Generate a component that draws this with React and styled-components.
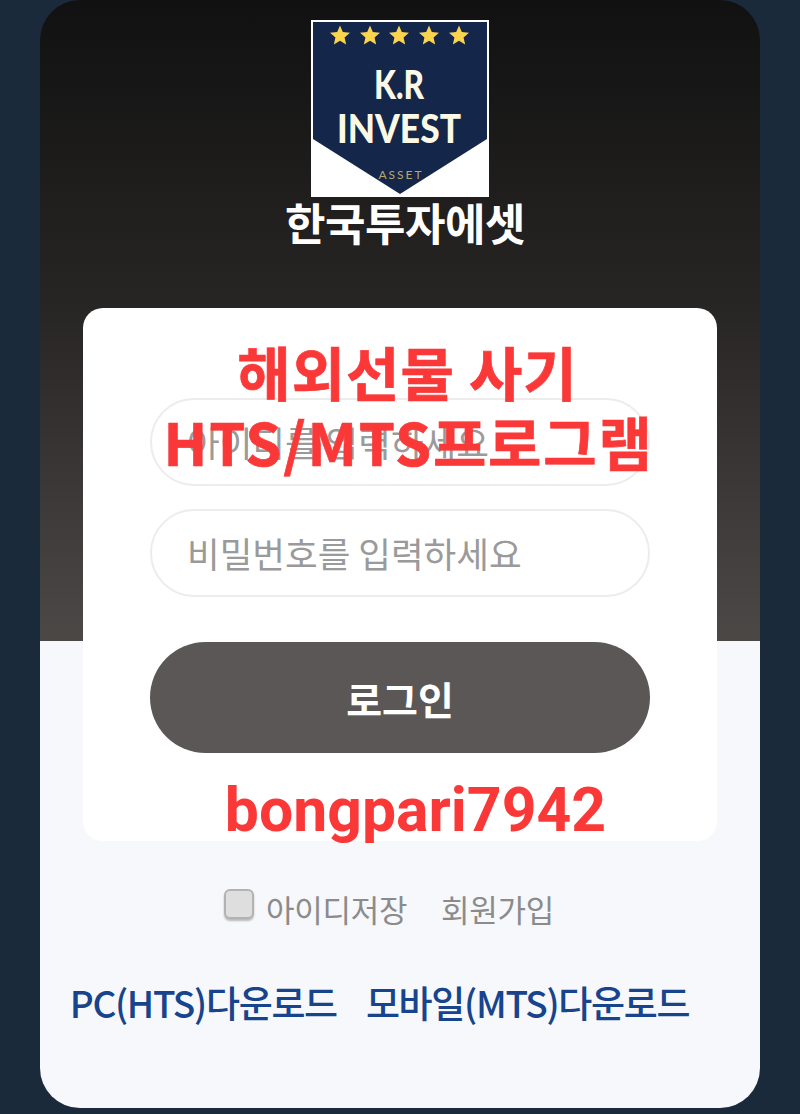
import styled, { createGlobalStyle } from "styled-components";

const KO = `"Noto Sans CJK KR", "Noto Sans", Roboto, sans-serif`;

const Global = createGlobalStyle`
  html, body { margin: 0; padding: 0; background: #1a2a3b; }
`;

const Page = styled.div`
  width: 800px;
  height: 1114px;
  padding: 0 40px;
  box-sizing: border-box;
  overflow: hidden;
  background: #1a2a3b;
  font-family: ${KO};
`;

const Frame = styled.div`
  height: 1108px;
  border-radius: 40px;
  overflow: hidden;
  display: flex;
  flex-direction: column;
  align-items: center;
  background: linear-gradient(#111 0, #272524 300px, #4b4846 641px, #f6f8fb 641px);
`;

const Logo = styled.svg`
  display: block;
  margin-top: 20px;
  width: 178px;
  height: 177px;
  flex: none;
`;

const Brand = styled.h1`
  margin: -2px 0 2px 10px;
  height: 54px;
  line-height: 54px;
  font-size: 44px;
  font-weight: 700;
  letter-spacing: -0.5px;
  color: #fff;
`;

const Card = styled.div`
  position: relative;
  margin-top: 57px;
  width: 634px;
  height: 533px;
  box-sizing: border-box;
  padding: 90px 67px 0;
  background: #fff;
  border-radius: 20px;
`;

const Field = styled.div`
  height: 88px;
  box-sizing: border-box;
  margin-bottom: 23px;
  padding-left: 35px;
  border: 2px solid #ececec;
  border-radius: 44px;
  font-size: 35.5px;
  line-height: 84px;
  color: #9a9a9a;
`;

const LoginButton = styled.button`
  display: block;
  width: 100%;
  height: 111px;
  margin-top: 45px;
  border: 0;
  border-radius: 56px;
  background: #5b5756;
  color: #fff;
  font-family: ${KO};
  font-size: 39px;
  font-weight: 700;
`;

const Notice = styled.div`
  position: absolute;
  left: 0;
  right: 0;
  top: ${(p) => p.$top}px;
  padding-left: ${(p) => p.$shift || 0}px;
  text-align: center;
  font-family: ${(p) => (p.$latin ? `Roboto, sans-serif` : KO)};
  font-size: ${(p) => p.$size}px;
  line-height: 70px;
  font-weight: 700;
  letter-spacing: ${(p) => p.$spacing || 0}px;
  -webkit-text-stroke: ${(p) => (p.$latin ? 0 : 0.7)}px #fb3838;
  white-space: nowrap;
  color: #fb3838;
`;

const Options = styled.div`
  display: flex;
  align-items: center;
  margin: 40px 22px 0 0;
  height: 54px;
  font-size: 31px;
  letter-spacing: -0.3px;
  color: #8b8b8b;
`;

const Check = styled.span`
  width: 30px;
  height: 30px;
  margin: -8px 12px 0 0;
  box-sizing: border-box;
  border: 2px solid #b3b3b3;
  border-radius: 6px;
  background: #dedede;
  box-shadow: 0 2px 2px rgba(0, 0, 0, 0.25);
`;

const OptionLink = styled.span`
  margin-left: ${(p) => p.$gap || 0}px;
`;

const Downloads = styled.div`
  display: flex;
  gap: 29px;
  margin: 42px 41px 0 0;
  font-size: 37px;
  font-weight: 500;
  letter-spacing: -1.3px;
  line-height: 50px;
  white-space: nowrap;
  color: #17448c;
`;

const StarShape = ({ x }) => {
  const pts = [];
  for (let i = 0; i < 10; i++) {
    const r = i % 2 ? 4.8 : 10.5;
    const a = (Math.PI / 5) * i - Math.PI / 2;
    pts.push(`${x + r * Math.cos(a)},${16 + r * Math.sin(a)}`);
  }
  return <polygon points={pts.join(" ")} fill="#fbd44e" />;
};

const LogoMark = () => (
  <Logo viewBox="0 0 178 177">
    <rect width="178" height="177" fill="#fff" />
    <polygon points="2,2 176,2 176,119 89,174 2,119" fill="#14264a" />
    {[29, 59, 88, 118, 148].map((x) => (
      <StarShape key={x} x={x} />
    ))}
    <text x="88" y="79" textAnchor="middle" textLength="50" lengthAdjust="spacingAndGlyphs" fontFamily="Lato, sans-serif" fontWeight="900" fontSize="39" fill="#fbf8e6">
      K.R
    </text>
    <text x="88" y="123" textAnchor="middle" textLength="124" lengthAdjust="spacingAndGlyphs" fontFamily="Lato, sans-serif" fontWeight="900" fontSize="39" fill="#fbf8e6">
      INVEST
    </text>
    <text x="89" y="159" textAnchor="middle" textLength="43" fontFamily="Lato, sans-serif" fontSize="12" fill="#b9a76c">
      ASSET
    </text>
  </Logo>
);

export default function App() {
  return (
    <Page>
      <Global />
      <Frame>
        <LogoMark />
        <Brand>한국투자에셋</Brand>
        <Card>
          <Field>아이디를 입력하세요</Field>
          <Field>비밀번호를 입력하세요</Field>
          <LoginButton>로그인</LoginButton>
          <Notice $top={28} $size={58} $spacing={1} $shift={15}>해외선물 사기</Notice>
          <Notice $top={98} $size={58} $spacing={1.8} $shift={17}>HTS/MTS프로그램</Notice>
          <Notice $top={468} $size={60.7} $latin $shift={31}>bongpari7942</Notice>
        </Card>
        <Options>
          <Check />
          아이디저장
          <OptionLink $gap={34}>회원가입</OptionLink>
        </Options>
        <Downloads>
          <span>PC(HTS)다운로드</span>
          <span>모바일(MTS)다운로드</span>
        </Downloads>
      </Frame>
    </Page>
  );
}
